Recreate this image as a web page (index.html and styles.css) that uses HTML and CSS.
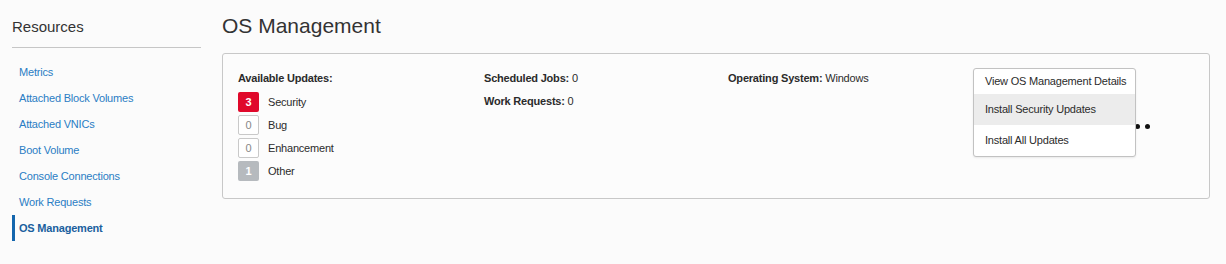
FILE: index.html
```html
<!DOCTYPE html>
<html>
<head>
<meta charset="utf-8">
<link rel="stylesheet" href="styles.css">
</head>
<body>
<div class="page">
  <aside class="sidebar">
    <h2 class="side-title">Resources</h2>
    <nav class="side-nav">
      <a class="side-link">Metrics</a>
      <a class="side-link">Attached Block Volumes</a>
      <a class="side-link">Attached VNICs</a>
      <a class="side-link">Boot Volume</a>
      <a class="side-link">Console Connections</a>
      <a class="side-link">Work Requests</a>
      <a class="side-link active">OS Management</a>
    </nav>
  </aside>
  <main class="main">
    <h1 class="title">OS Management</h1>
    <section class="card">
      <div class="col">
        <div class="row"><span class="label">Available Updates:</span></div>
        <ul class="updates">
          <li class="upd"><span class="badge red">3</span><span>Security</span></li>
          <li class="upd"><span class="badge outline">0</span><span>Bug</span></li>
          <li class="upd"><span class="badge outline">0</span><span>Enhancement</span></li>
          <li class="upd"><span class="badge gray">1</span><span>Other</span></li>
        </ul>
      </div>
      <div class="col">
        <div class="row"><span class="label">Scheduled Jobs:</span> 0</div>
        <div class="row row2"><span class="label">Work Requests:</span> 0</div>
      </div>
      <div class="col">
        <div class="row"><span class="label">Operating System:</span> Windows</div>
      </div>
      <div class="kebab">
        <span class="dot"></span><span class="dot"></span><span class="dot"></span>
      </div>
      <div class="menu">
        <div class="menu-item first">View OS Management Details</div>
        <div class="menu-item hover">Install Security Updates</div>
        <div class="menu-item">Install All Updates</div>
      </div>
    </section>
  </main>
</div>
</body>
</html>
```
FILE: styles.css
```css
* { box-sizing: border-box; }
html, body { margin: 0; padding: 0; }
body {
  background: #fbfbfb;
  font-family: "Liberation Sans", Arial, sans-serif;
  color: #2b2b2b;
  width: 1226px;
  height: 264px;
  overflow: hidden;
}
.page {
  display: flex;
  gap: 21px;
  padding-left: 12px;
}
.sidebar {
  width: 189px;
  flex: none;
  padding-top: 18px;
}
.side-title {
  margin: 0;
  font-size: 15px;
  font-weight: normal;
  line-height: 18px;
  padding-bottom: 11px;
  border-bottom: 1px solid #c6c6c6;
  color: #333;
}
.side-nav {
  display: flex;
  flex-direction: column;
  padding-top: 11px;
}
.side-link {
  display: block;
  height: 26px;
  line-height: 26px;
  font-size: 11px;
  letter-spacing: -0.2px;
  color: #2a7dc4;
  padding-left: 7px;
  text-decoration: none;
}
.side-link.active {
  border-left: 3px solid #1466ad;
  padding-left: 4px;
  color: #1a5f9e;
  font-weight: bold;
}
.main {
  width: 988px;
  flex: none;
  padding-top: 14px;
}
.title {
  margin: 0 0 15px;
  font-size: 21px;
  font-weight: normal;
  line-height: 24px;
  color: #333;
}
.card {
  position: relative;
  height: 146px;
  border: 1px solid #c8c8c8;
  border-radius: 3px;
  background: #fcfcfc;
  padding: 17px 15px 0;
  display: grid;
  grid-template-columns: 246px 244px 1fr auto;
  align-items: start;
  font-size: 11px;
  letter-spacing: -0.2px;
}
.label { font-weight: bold; }
.row { line-height: 14px; height: 14px; }
.row2 { margin-top: 9px; }
.updates {
  list-style: none;
  margin: 7px 0 0;
  padding: 0;
  display: flex;
  flex-direction: column;
  gap: 3px;
}
.upd {
  display: flex;
  align-items: center;
  gap: 9px;
  height: 20px;
}
.badge {
  width: 21px;
  height: 20px;
  border-radius: 2px;
  display: flex;
  align-items: center;
  justify-content: center;
  font-size: 11px;
  letter-spacing: 0;
}
.badge.red { background: #e0092b; color: #fff; font-weight: bold; }
.badge.outline { border: 1px solid #c9c9c9; background: #fff; color: #888; }
.badge.gray { background: #b6babe; color: #fff; font-weight: bold; }
.kebab {
  align-self: center;
  display: flex;
  gap: 5px;
  margin-right: 44px;
  margin-top: -17px;
}
.dot {
  width: 5px;
  height: 5px;
  border-radius: 50%;
  background: #111;
}
.menu {
  position: absolute;
  left: 750px;
  top: 14px;
  width: 163px;
  background: #fff;
  border: 1px solid #c2c2c2;
  border-radius: 3px;
  box-shadow: 0 1px 2px rgba(0,0,0,0.08);
  font-size: 11px;
  letter-spacing: -0.2px;
  color: #2b2b2b;
}
.menu-item {
  height: 31px;
  line-height: 31px;
  padding-left: 11px;
  white-space: nowrap;
}
.menu-item.first { height: 25px; line-height: 25px; }
.menu-item.hover { background: #ececec; }
```
